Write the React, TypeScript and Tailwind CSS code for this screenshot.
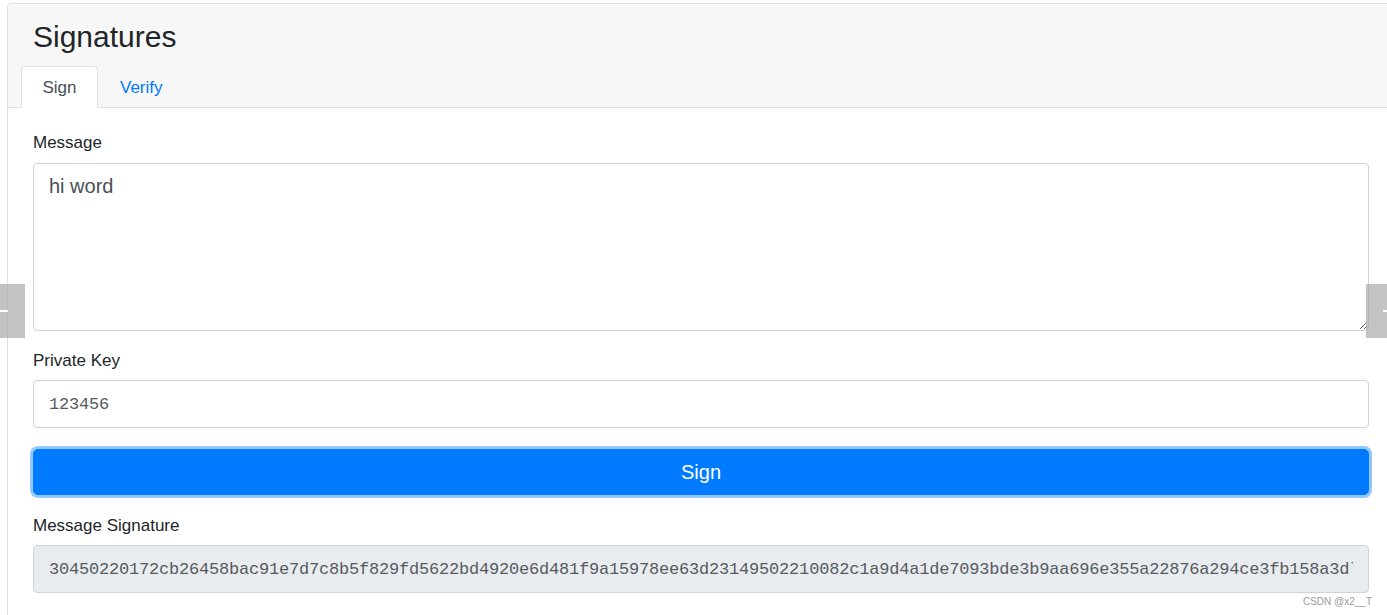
import React, { useState } from 'react';

const SIG =
  '30450220172cb26458bac91e7d7c8b5f829fd5622bd4920e6d481f9a15978ee63d23149502210082c1a9d4a1de7093bde3b9aa696e355a22876a294ce3fb158a3dl';

const App: React.FC = () => {
  const [tab, setTab] = useState<'sign' | 'verify'>('sign');
  const [message, setMessage] = useState('hi word');
  const [privateKey, setPrivateKey] = useState('123456');

  const tabClass = (active: boolean) =>
    active
      ? 'h-[42px] pt-[1px] bg-white border border-[#dee2e6] border-b-white rounded-t-[4px] text-[17px] text-[#495057]'
      : 'h-[42px] pt-[1px] border border-transparent text-[17px] text-[#007bff]';

  return (
    <div className="relative w-[1387px] h-[615px] overflow-hidden bg-white font-['Liberation_Sans',Arial,sans-serif] text-[#212529]">
      <div className="ml-[7px] mt-[3px] w-[1388px] border border-[#dfdfdf] rounded-[4px] bg-white">
        {/* header */}
        <div className="flex flex-col bg-[#f7f7f7] border-b border-[#dee2e6] rounded-t-[4px] pl-[13px] pt-[15px]">
          <h3 className="pl-[12px] text-[30px] leading-[36px] font-normal text-[#212529]">Signatures</h3>
          <div className="flex mt-[11px] -mb-px">
            <button onClick={() => setTab('sign')} className={`w-[77px] ${tabClass(tab === 'sign')}`}>
              Sign
            </button>
            <button onClick={() => setTab('verify')} className={`px-[21px] ${tabClass(tab === 'verify')}`}>
              Verify
            </button>
          </div>
        </div>

        {/* body */}
        <div className="flex flex-col w-[1386px] px-[25px] pt-[25px] pb-[40px]">
          <label className="text-[17px] leading-[20px] text-[#212529]">Message</label>
          <textarea
            value={message}
            onChange={(e) => setMessage(e.target.value)}
            className="mt-[10px] h-[168px] px-[15px] py-[10px] border border-[#ced4da] rounded-[4px] text-[20px] leading-[24px] text-[#495057] font-['Liberation_Sans',Arial,sans-serif] outline-none"
          />
          <label className="mt-[20px] text-[17px] leading-[20px] text-[#212529]">Private Key</label>
          <input
            value={privateKey}
            onChange={(e) => setPrivateKey(e.target.value)}
            className="mt-[9px] h-[48px] px-[15px] border border-[#ced4da] rounded-[4px] text-[17px] tracking-[-0.2px] text-[#555b61] font-['Liberation_Mono',monospace] outline-none"
          />
          <button className="mt-[21px] h-[46px] bg-[#007bff] border border-[#007bff] rounded-[5px] text-[20px] text-white shadow-[0_0_0_3px_rgba(38,143,255,0.5)]">
            Sign
          </button>
          <label className="mt-[21px] text-[17px] leading-[20px] text-[#212529]">Message Signature</label>
          <input
            readOnly
            value={SIG}
            className="mt-[9px] h-[48px] px-[15px] bg-[#e9ecef] border border-[#ced4da] rounded-[4px] text-[17px] tracking-[-0.2px] text-[#555b61] font-['Liberation_Mono',monospace] outline-none"
          />
        </div>
      </div>

      {/* image viewer arrows lying over the screenshot */}
      <div className="absolute left-0 top-[284px] flex items-center w-[25px] h-[54px] bg-[rgba(170,170,170,0.7)]">
        <div className="w-[8px] h-[2px] bg-white" />
      </div>
      <div className="absolute right-0 top-[284px] flex items-center justify-end w-[21px] h-[54px] bg-[rgba(170,170,170,0.7)]">
        <div className="w-[4px] h-[2px] bg-white" />
      </div>

      {/* watermark */}
      <div className="absolute right-[15px] top-[594px] text-[10px] text-[#9a9a9a]">CSDN @x2__T</div>
    </div>
  );
};

export default App;
